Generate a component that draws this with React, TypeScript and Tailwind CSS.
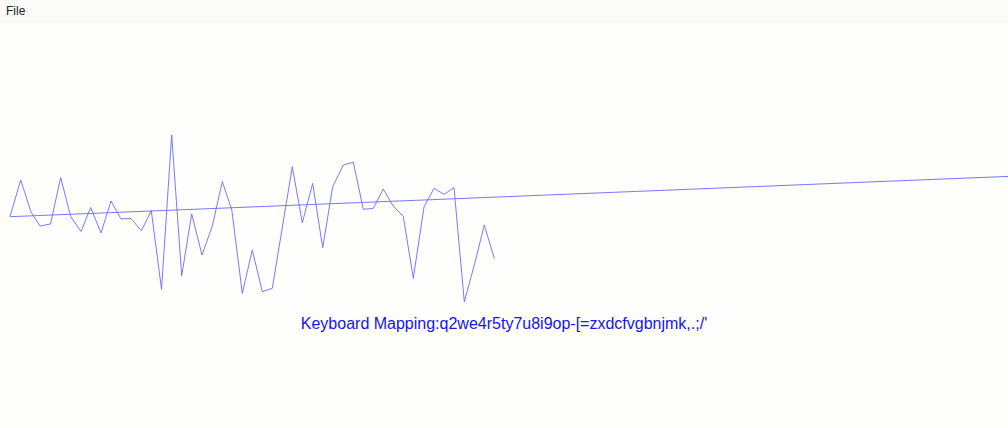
import React from "react";

// sampled waveform points (page coordinates)
const wave: [number, number][] = [
  [10, 216.7], [20.7, 180], [31, 212], [40, 226], [50.5, 224], [60.7, 177.5],
  [70.7, 216.5], [81, 231.5], [90.7, 207.5], [101, 233], [111, 201], [121, 219],
  [131, 218.5], [141.3, 230.7], [151.3, 210.7], [161.5, 289.3], [171.7, 135],
  [181.7, 275.7], [191.7, 214], [202, 255], [212.3, 226], [222.3, 181.5],
  [231.8, 210], [242.3, 293.3], [252.3, 250], [262.3, 291.7], [272.3, 288.3],
  [292.3, 166.7], [302.3, 222.7], [312.7, 183.3], [322.7, 247.7], [332.7, 186.7],
  [343.3, 165], [353.3, 162.3], [363.3, 209.3], [373.3, 208.3], [383.3, 189],
  [392.8, 205.5], [403.3, 216.5], [413.3, 278.3], [424, 207], [434, 188.3],
  [444, 194.3], [454, 187.7], [464.3, 301.7], [474.3, 265], [484.3, 225],
  [494.3, 258.3],
];

export default function App() {
  const pts = wave.map(([x, y]) => `${x},${y}`).join(" ");

  return (
    <div className="w-[1008px] h-[428px] bg-[#fefefc] flex flex-col font-['Liberation_Sans',Arial,sans-serif] overflow-hidden">
      {/* menu bar */}
      <div className="h-[22px] bg-[#fbfbf9] border-b border-[#f3f3f0] flex items-center px-[6px]">
        <span className="text-[12px] text-[#222] leading-none">File</span>
      </div>

      {/* plot */}
      <svg width={1008} height={290} viewBox="0 22 1008 290" className="block">
        <line x1={10} y1={216.7} x2={1008} y2={176.4} stroke="#6a6aff" strokeWidth={0.9} />
        <polyline points={pts} fill="none" stroke="#6a6aff" strokeWidth={0.9} strokeLinejoin="miter" />
      </svg>

      <div className="flex justify-center mt-[3px]">
        <span className="text-[16px] leading-[18px] text-[#1414f0]">
          Keyboard Mapping:q2we4r5ty7u8i9op-[=zxdcfvgbnjmk,.;/'
        </span>
      </div>
    </div>
  );
}
